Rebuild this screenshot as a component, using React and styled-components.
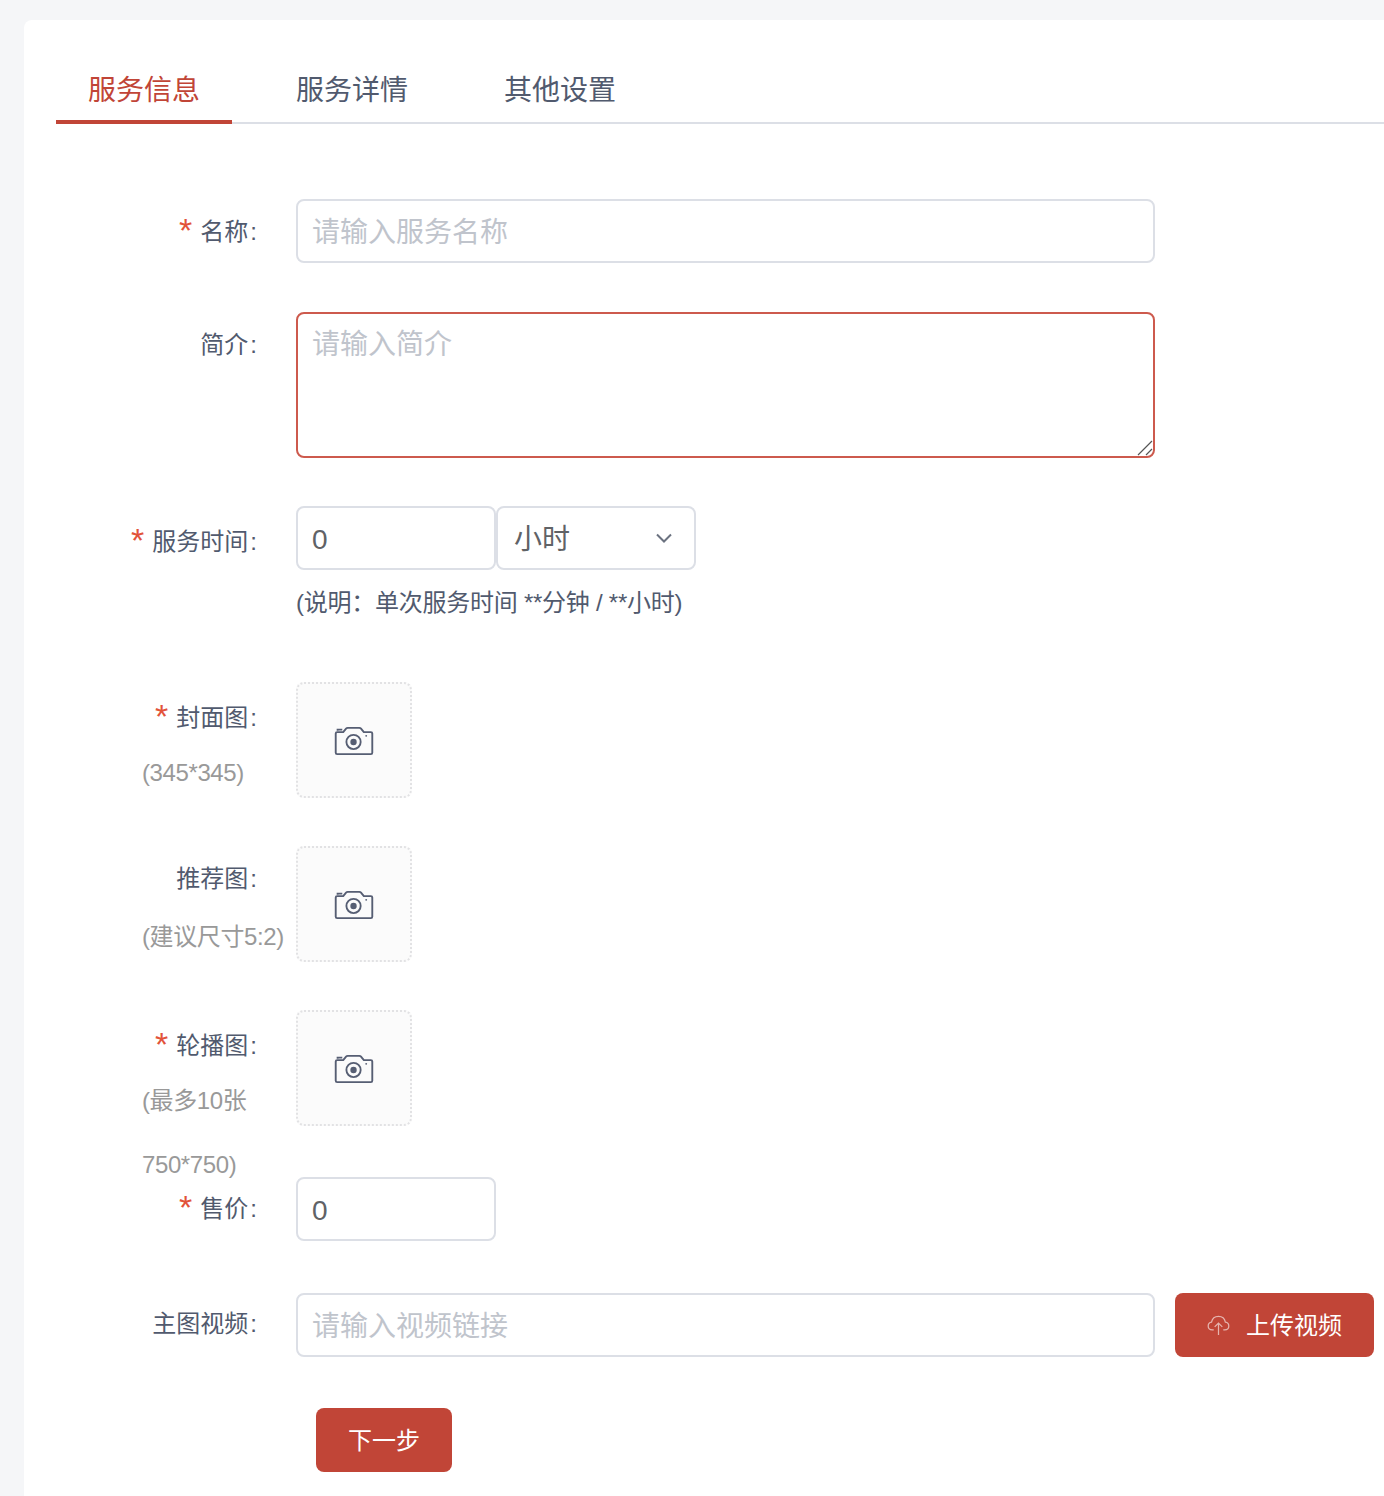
import React from 'react';
import styled, { createGlobalStyle } from 'styled-components';

const colors = {
  page: '#f5f6f8',
  primary: '#c14537',
  focus: '#cd5a4d',
  text: '#515a6e',
  input: '#606266',
  placeholder: '#c0c4cc',
  border: '#dcdfe6',
  required: '#e2533a',
  note: '#999999',
};

const GlobalStyle = createGlobalStyle`
  html, body {
    margin: 0;
    overflow: hidden;
    background: ${colors.page};
  }
  * {
    box-sizing: border-box;
  }
  body {
    font-family: "Liberation Sans", "Noto Sans CJK SC", sans-serif;
  }
`;

const Page = styled.div`
  padding: 20px 0 0 24px;
  width: 1384px;
  height: 1496px;
`;

const Card = styled.div`
  background: #fff;
  border-radius: 8px 0 0 0;
  height: 1476px;
  padding: 34px 0 0 32px;
`;

const TabBar = styled.div`
  display: flex;
  gap: 32px;
  height: 70px;
  border-bottom: 2px solid ${colors.border};
`;

const Tab = styled.div`
  position: relative;
  height: 70px;
  padding: 0 32px;
  font-size: 28px;
  line-height: 74px;
  color: ${(props) => (props.active ? colors.primary : colors.text)};

  &::after {
    content: '';
    display: ${(props) => (props.active ? 'block' : 'none')};
    position: absolute;
    left: 0;
    right: 0;
    bottom: 0;
    height: 4px;
    background: ${colors.primary};
  }
`;

const Form = styled.div`
  padding: 75px 0 0 86px;
`;

const Row = styled.div`
  display: flex;
  align-items: flex-start;
  height: ${(props) => props.height}px;
  margin-bottom: ${(props) => props.gap}px;
`;

const LabelCol = styled.div`
  flex: none;
  width: 154px;
`;

const Label = styled.div`
  margin-left: -20px;
  padding: ${(props) => props.top || 0}px 39px 0 0;
  text-align: right;
  white-space: nowrap;
  font-size: 24px;
  line-height: ${(props) => props.lineHeight || 64}px;
  color: ${colors.text};
`;

const Colon = styled.span`
  margin-left: 2px;
`;

const Star = styled.span`
  color: ${colors.required};
  font-size: 34px;
  line-height: 1;
  margin-right: 8px;
  vertical-align: -2px;
`;

const Note = styled.div`
  font-size: 24px;
  line-height: 64px;
  letter-spacing: -0.4px;
  margin-top: -4px;
  color: ${colors.note};
`;

const TextInput = styled.input`
  display: block;
  width: ${(props) => props.width || 859}px;
  height: 64px;
  padding: 4px 14px 0;
  border: 2px solid ${colors.border};
  border-radius: 8px;
  outline: none;
  background: #fff;
  font-family: inherit;
  font-size: 28px;
  color: ${colors.input};

  &::placeholder {
    color: ${colors.placeholder};
    opacity: 1;
  }
`;

const TextAreaWrap = styled.div`
  position: relative;
  width: 859px;
  height: 146px;
`;

const TextArea = styled.textarea`
  display: block;
  width: 100%;
  height: 100%;
  padding: 11px 14px;
  border: 2px solid ${colors.focus};
  border-radius: 8px;
  outline: none;
  background: #fff;
  font-family: inherit;
  font-size: 28px;
  line-height: 40px;
  color: ${colors.input};
  resize: none;

  &::placeholder {
    color: ${colors.placeholder};
    opacity: 1;
  }
`;

const Grip = styled.svg`
  position: absolute;
  right: 2px;
  bottom: 2px;
`;

const InlineGroup = styled.div`
  display: flex;
  align-items: flex-start;
`;

const SelectBox = styled.div`
  display: flex;
  align-items: center;
  justify-content: space-between;
  width: 200px;
  height: 64px;
  padding: 0 21px 2px 16px;
  border: 2px solid ${colors.border};
  border-radius: 8px;
  font-size: 28px;
  color: ${colors.input};
`;

const Help = styled.div`
  margin-top: 12px;
  font-size: 24px;
  line-height: 42px;
  letter-spacing: -0.25px;
  color: ${colors.text};
`;

const Uploader = styled.div`
  display: flex;
  align-items: center;
  justify-content: center;
  width: 116px;
  height: 116px;
  padding-top: 2px;
  background: #fbfbfb;
  border: 2px dotted #e2e2e4;
  border-radius: 8px;
`;

const Button = styled.button`
  display: flex;
  align-items: center;
  justify-content: center;
  gap: 16px;
  width: ${(props) => props.width}px;
  height: 64px;
  padding: 0 0 4px;
  border: 0;
  border-radius: 8px;
  background: ${colors.primary};
  color: #fff;
  font-family: inherit;
  font-size: 24px;
`;

const UploadGlyph = styled.svg`
  margin-top: 5px;
`;

const ChevronGlyph = styled.svg`
  margin-top: 2px;
`;

const VideoField = styled.div`
  display: flex;
  gap: 20px;
`;

const Footer = styled.div`
  padding-left: 174px;
`;

const CameraIcon = () => (
  <svg width="40" height="30" viewBox="0 0 42 32" fill="none" stroke="#565e73" strokeWidth="2">
    <path d="M3 6.500h6.500l3-3.600c.5-.6 1-.9 1.800-.9h12.400c.8 0 1.300.3 1.800.9l3 3.600h7.500c1 0 1.500.6 1.500 1.500v20.500c0 1-.5 1.500-1.500 1.500H3c-1 0-1.500-.5-1.500-1.500V8c0-.9.5-1.500 1.500-1.500z" strokeLinejoin="round" />
    <path d="M3.500 5V3.800h5" />
    <circle cx="20.500" cy="17" r="7.600" />
    <circle cx="20.500" cy="17" r="3.400" fill="#565e73" stroke="none" />
    <circle cx="34" cy="10.500" r="1" fill="#565e73" stroke="none" />
  </svg>
);

const ChevronIcon = () => (
  <ChevronGlyph width="18" height="12" viewBox="0 0 18 12" fill="none" stroke="#6b7280" strokeWidth="2">
    <path d="M2 2.500l7 7 7-7" />
  </ChevronGlyph>
);

const CloudIcon = () => (
  <UploadGlyph width="23" height="21" viewBox="0 0 24 22" fill="none" stroke="#fff" strokeOpacity="0.6" strokeWidth="1.300">
    <path d="M7 15.500H5.500C3 15.500 1.200 13.800 1.200 11.500c0-2 1.500-3.700 3.500-4C5.400 4 8.300 1.500 12 1.500c3.600 0 6.500 2.500 7.200 6 2.100.3 3.600 2 3.600 4 0 2.300-1.800 4-4.300 4H17" />
    <path d="M12 21V9M8 12.500L12 8.500l4 4" />
  </UploadGlyph>
);

const Required = () => <Star>*</Star>;

export default function App() {
  return (
    <Page>
      <GlobalStyle />
      <Card>
        <TabBar>
          <Tab active>服务信息</Tab>
          <Tab>服务详情</Tab>
          <Tab>其他设置</Tab>
        </TabBar>
        <Form>
          <Row height={64} gap={49}>
            <LabelCol>
              <Label top={1}><Required />名称<Colon>:</Colon></Label>
            </LabelCol>
            <TextInput placeholder="请输入服务名称" />
          </Row>
          <Row height={146} gap={48}>
            <LabelCol>
              <Label top={1}>简介<Colon>:</Colon></Label>
            </LabelCol>
            <TextAreaWrap>
              <TextArea placeholder="请输入简介" />
              <Grip width="16" height="16" viewBox="0 0 16 16" stroke="#555" strokeWidth="1.200">
                <path d="M1 15L15 1M9 15l6-6" />
              </Grip>
            </TextAreaWrap>
          </Row>
          <Row height={128} gap={48}>
            <LabelCol>
              <Label top={4}><Required />服务时间<Colon>:</Colon></Label>
            </LabelCol>
            <div>
              <InlineGroup>
                <TextInput width={200} defaultValue="0" />
                <SelectBox>
                  小时
                  <ChevronIcon />
                </SelectBox>
              </InlineGroup>
              <Help>(说明：单次服务时间 **分钟 / **小时)</Help>
            </div>
          </Row>
          <Row height={116} gap={48}>
            <LabelCol>
              <Label top={9} lineHeight={54}><Required />封面图<Colon>:</Colon></Label>
              <Note>(345*345)</Note>
            </LabelCol>
            <Uploader><CameraIcon /></Uploader>
          </Row>
          <Row height={116} gap={48}>
            <LabelCol>
              <Label top={3} lineHeight={60}>推荐图<Colon>:</Colon></Label>
              <Note>(建议尺寸5:2)</Note>
            </LabelCol>
            <Uploader><CameraIcon /></Uploader>
          </Row>
          <Row height={116} gap={51}>
            <LabelCol>
              <Label top={9} lineHeight={54}><Required />轮播图<Colon>:</Colon></Label>
              <Note>(最多10张 750*750)</Note>
            </LabelCol>
            <Uploader><CameraIcon /></Uploader>
          </Row>
          <Row height={64} gap={52}>
            <LabelCol>
              <Label><Required />售价<Colon>:</Colon></Label>
            </LabelCol>
            <TextInput width={200} defaultValue="0" />
          </Row>
          <Row height={64} gap={51}>
            <LabelCol>
              <Label lineHeight={62}>主图视频<Colon>:</Colon></Label>
            </LabelCol>
            <VideoField>
              <TextInput placeholder="请输入视频链接" />
              <Button width={199}>
                <CloudIcon />
                上传视频
              </Button>
            </VideoField>
          </Row>
          <Footer>
            <Button width={136}>下一步</Button>
          </Footer>
        </Form>
      </Card>
    </Page>
  );
}
